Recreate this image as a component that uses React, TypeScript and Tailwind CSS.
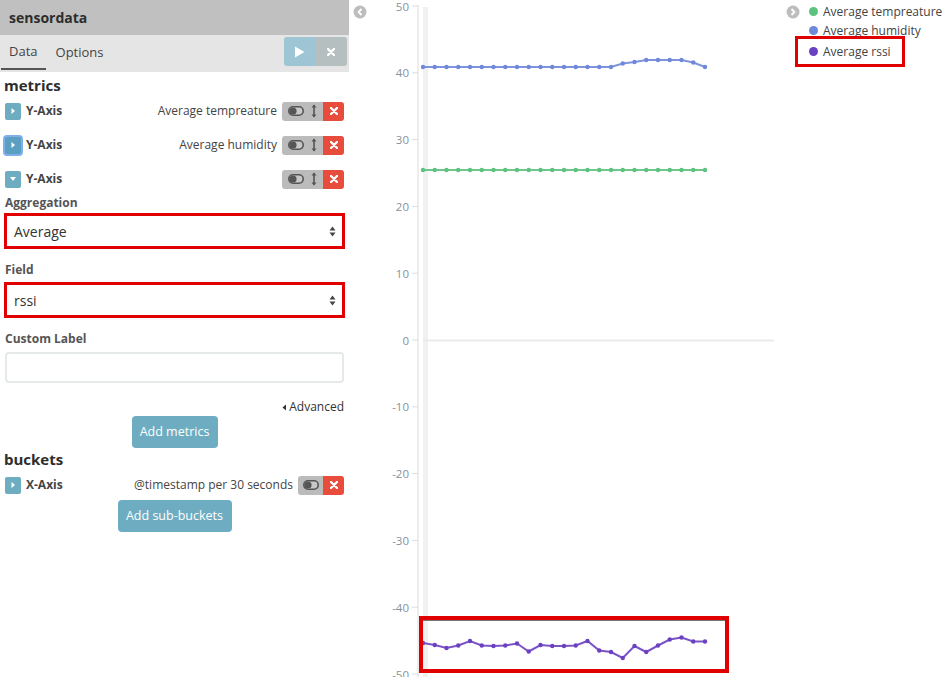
import React from "react";

const blue = [67, 67, 67, 67, 67, 67, 67, 67, 67, 67, 67, 67, 67, 67, 67, 67, 67, 63.5, 62, 60, 60, 60, 60, 62.5, 67];
const green = Array.from({ length: 25 }, () => 170);
const purple = [643, 645, 648, 645.5, 641, 645.5, 646, 645.5, 643.5, 651.5, 645, 646, 646, 645.5, 641, 650.5, 652, 658, 646, 652, 645.5, 639.5, 637.5, 641.5, 641.5];

const OX = 352;
const px = (i: number) => 423 - OX + i * 11.75;

const Caret = ({ down }: { down?: boolean }) => (
  <svg width="6" height="8" viewBox="0 0 6 8">
    {down ? <path d="M0 2 L6 2 L3 6 Z" fill="#fff" /> : <path d="M1.5 1 L5 4 L1.5 7 Z" fill="#fff" />}
  </svg>
);

const ToggleIcon = () => (
  <svg width="16" height="10" viewBox="0 0 16 10">
    <rect x="0.8" y="0.8" width="14.4" height="8.4" rx="4.2" fill="#c8c8c8" stroke="#555" strokeWidth="1.6" />
    <circle cx="5" cy="5" r="3.6" fill="#555" />
  </svg>
);

const ArrowsIcon = () => (
  <svg width="6" height="14" viewBox="0 0 6 14">
    <path d="M3 1 L3 13" stroke="#555" strokeWidth="1.6" />
    <path d="M0.5 3.5 L3 0.5 L5.5 3.5 Z M0.5 10.5 L3 13.5 L5.5 10.5 Z" fill="#555" />
  </svg>
);

const XIcon = () => (
  <svg width="8" height="8" viewBox="0 0 8 8">
    <path d="M1 1 L7 7 M7 1 L1 7" stroke="#fff" strokeWidth="2.4" strokeLinecap="round" />
  </svg>
);

const Controls = ({ arrows = true }: { arrows?: boolean }) => (
  <div className="flex h-[19px] rounded-[3px] overflow-hidden">
    {arrows ? (
      <div className="flex items-center bg-[#bbbbbb] pl-[6px] gap-[7px] pr-[6px]">
        <ToggleIcon />
        <ArrowsIcon />
      </div>
    ) : (
      <div className="flex items-center justify-center bg-[#bbbbbb] w-[25px]">
        <ToggleIcon />
      </div>
    )}
    <div className="flex items-center justify-center w-[21px] bg-[#e74c3c]">
      <XIcon />
    </div>
  </div>
);

const AxisRow = ({ name, label, down, focus }: { name: string; label?: string; down?: boolean; focus?: boolean }) => (
  <div className="flex items-center h-[34px]">
    <div
      className={
        focus
          ? "flex items-center justify-center w-[16px] h-[17px] rounded-[2px] bg-[#5b9fc2] ring-2 ring-[#4a8fe0]/70"
          : "flex items-center justify-center w-[16px] h-[17px] rounded-[2px] bg-[#6eadc1]"
      }
    >
      <Caret down={down} />
    </div>
    <span className="ml-[5px] font-bold text-[12px] text-[#444]">{name}</span>
    <span className="ml-auto mr-[5px] text-[12px] text-[#444]">{label}</span>
    <Controls />
  </div>
);

const SelectBox = ({ value }: { value: string }) => (
  <div className="-mx-[1px] border-[3px] border-[#e00000]">
    <div className="flex items-center h-[30px] bg-white pl-[7px] pr-[6px]">
      <span className="text-[14px] text-[#333]">{value}</span>
      <svg className="ml-auto" width="7" height="11" viewBox="0 0 7 11">
        <path d="M0.5 4.5 L3.5 0.5 L6.5 4.5 Z M0.5 6.5 L3.5 10.5 L6.5 6.5 Z" fill="#444" />
      </svg>
    </div>
  </div>
);

const Label = ({ text, className }: { text: string; className: string }) => (
  <div className={"h-[14px] leading-[14px] font-bold text-[12px] text-[#555] " + className}>{text}</div>
);

const line = (ys: number[]) => ys.map((y, i) => `${px(i)},${y}`).join(" ");

const Series = ({ ys, color }: { ys: number[]; color: string }) => (
  <g>
    <polyline points={line(ys)} fill="none" stroke={color} strokeWidth="2" strokeOpacity="0.9" />
    {ys.map((y, i) => (
      <circle key={i} cx={px(i)} cy={y} r="2.2" fill={color} />
    ))}
  </g>
);

const Chart = () => {
  const ticks = [50, 40, 30, 20, 10, 0, -10, -20, -30, -40, -50];
  return (
    <svg width="428" height="677" viewBox="0 0 428 677" className="shrink-0">
      <circle cx={360 - OX} cy="12" r="6.5" fill="#bdbdbd" />
      <path d={`M${361.5 - OX} 9 L${358.5 - OX} 12 L${361.5 - OX} 15`} stroke="#fff" strokeWidth="1.8" fill="none" />
      <rect x={423 - OX} y="7" width="5" height="670" fill="#f1f1f1" />
      <line x1={418 - OX} y1="5" x2={418 - OX} y2="677" stroke="#dcdcdc" strokeWidth="1" />
      {ticks.map((t) => {
        const y = 340 - t * 6.68;
        return (
          <g key={t}>
            <line x1={412 - OX} y1={y} x2={418 - OX} y2={y} stroke="#dcdcdc" strokeWidth="1" />
            <text
              x={409 - OX}
              y={t === 50 ? y + 5 : y + 4.5}
              textAnchor="end"
              fontSize="11.5"
              fill="#8a919c"
              fontFamily="'Open Sans', sans-serif"
            >
              {t}
            </text>
          </g>
        );
      })}
      <line x1={423 - OX} y1="340.5" x2={774 - OX} y2="340.5" stroke="#ebebeb" strokeWidth="2" />
      <Series ys={blue} color="#6f88d9" />
      <Series ys={green} color="#5cc27e" />
      <Series ys={purple} color="#6c41c1" />
      <rect x={421 - OX} y="618" width="306" height="53" fill="none" stroke="#e00000" strokeWidth="4" />
      <line x1={423 - OX} y1="620.5" x2={725 - OX} y2="620.5" stroke="#777" strokeWidth="1" />
    </svg>
  );
};

const LegendItem = ({ color, text }: { color: string; text: string }) => (
  <div className="flex items-center h-[19px]">
    <span className="w-[9px] h-[9px] rounded-full mr-[5px]" style={{ backgroundColor: color }} />
    <span className="text-[12px] text-[#444]">{text}</span>
  </div>
);

export default function App() {
  return (
    <div className="flex w-[952px] h-[677px] bg-white overflow-hidden" style={{ fontFamily: "'Open Sans', 'Liberation Sans', sans-serif" }}>
      <div className="w-[349px] shrink-0 flex flex-col">
        <div className="h-[35px] bg-[#c0c0c0] flex items-center pl-[9px]">
          <span className="font-bold text-[14px] text-[#2d2d2d]">sensordata</span>
        </div>
        <div className="h-[37px] bg-[#e5e5e5] flex items-start">
          <div className="flex h-[35px] items-center">
            <div className="h-full flex items-center px-[8px] ml-[1px] border-b-2 border-[#555] text-[13px] text-[#444]">Data</div>
            <div className="h-full flex items-center px-[10px] text-[13px] text-[#444]">Options</div>
          </div>
          <div className="ml-auto mt-[2px] mr-[2px] flex h-[29px] rounded-[3px] overflow-hidden">
            <div className="w-[31px] flex items-center justify-center bg-[#9ec5d3]">
              <svg width="11" height="12" viewBox="0 0 11 12">
                <path d="M1 0.5 L10.5 6 L1 11.5 Z" fill="#fff" />
              </svg>
            </div>
            <div className="w-[32px] flex items-center justify-center bg-[#b5bfbf]">
              <XIcon />
            </div>
          </div>
        </div>
        <div className="px-[5px] flex flex-col">
          <div className="h-[22px] pt-[3px] leading-[20px] font-bold text-[15px] text-[#2d2d2d] -ml-[1px]">metrics</div>
          <AxisRow name="Y-Axis" label="Average tempreature" />
          <AxisRow name="Y-Axis" label="Average humidity" focus />
          <AxisRow name="Y-Axis" down />
          <Label text="Aggregation" className="" />
          <div className="mt-[3px]">
            <SelectBox value="Average" />
          </div>
          <Label text="Field" className="mt-[14px]" />
          <div className="mt-[5px]">
            <SelectBox value="rssi" />
          </div>
          <Label text="Custom Label" className="mt-[14px]" />
          <div className="mt-[6px] h-[31px] rounded-[4px] border-2 border-[#e6e9e9] bg-white" />
          <div className="mt-[16px] h-[16px] flex items-center justify-end text-[12px] text-[#333]">
            <svg width="5" height="7" viewBox="0 0 5 7" className="mr-[2px]">
              <path d="M4 0.5 L0.5 3.5 L4 6.5 Z" fill="#333" />
            </svg>
            Advanced
          </div>
          <div className="mt-[1px] flex justify-center">
            <div className="h-[32px] w-[86px] rounded-[4px] bg-[#6eadc1] text-white text-[12.5px] flex items-center justify-center">Add metrics</div>
          </div>
          <div className="mt-[1px] h-[20px] leading-[20px] font-bold text-[15px] text-[#2d2d2d] -ml-[1px]">buckets</div>
          <div className="mt-[2px] h-[28px] flex items-center">
            <div className="flex items-center justify-center w-[16px] h-[17px] rounded-[2px] bg-[#6eadc1]">
              <Caret />
            </div>
            <span className="ml-[5px] font-bold text-[12px] text-[#444]">X-Axis</span>
            <span className="ml-auto mr-[5px] text-[12px] text-[#444]">@timestamp per 30 seconds</span>
            <Controls arrows={false} />
          </div>
          <div className="mt-[1px] flex justify-center">
            <div className="h-[32px] w-[114px] rounded-[4px] bg-[#6eadc1] text-white text-[12.5px] flex items-center justify-center">Add sub-buckets</div>
          </div>
        </div>
      </div>
      <div className="w-[3px] shrink-0" />
      <Chart />
      <div className="flex-1 flex flex-col pt-[2px]">
        <div className="flex items-center h-[19px]">
          <svg width="14" height="14" viewBox="0 0 14 14" className="ml-[6px] mr-[9px]">
            <circle cx="7" cy="7" r="6.5" fill="#bdbdbd" />
            <path d="M5.5 4 L8.5 7 L5.5 10" stroke="#fff" strokeWidth="1.8" fill="none" />
          </svg>
          <LegendItem color="#5cc27e" text="Average tempreature" />
        </div>
        <div className="pl-[29px]">
          <LegendItem color="#6f88d9" text="Average humidity" />
        </div>
        <div className="-mt-[4px] ml-[15px] w-[110px] h-[31px] border-[3px] border-[#e00000] flex items-center pl-[11px]">
          <LegendItem color="#6c41c1" text="Average rssi" />
        </div>
      </div>
    </div>
  );
}
